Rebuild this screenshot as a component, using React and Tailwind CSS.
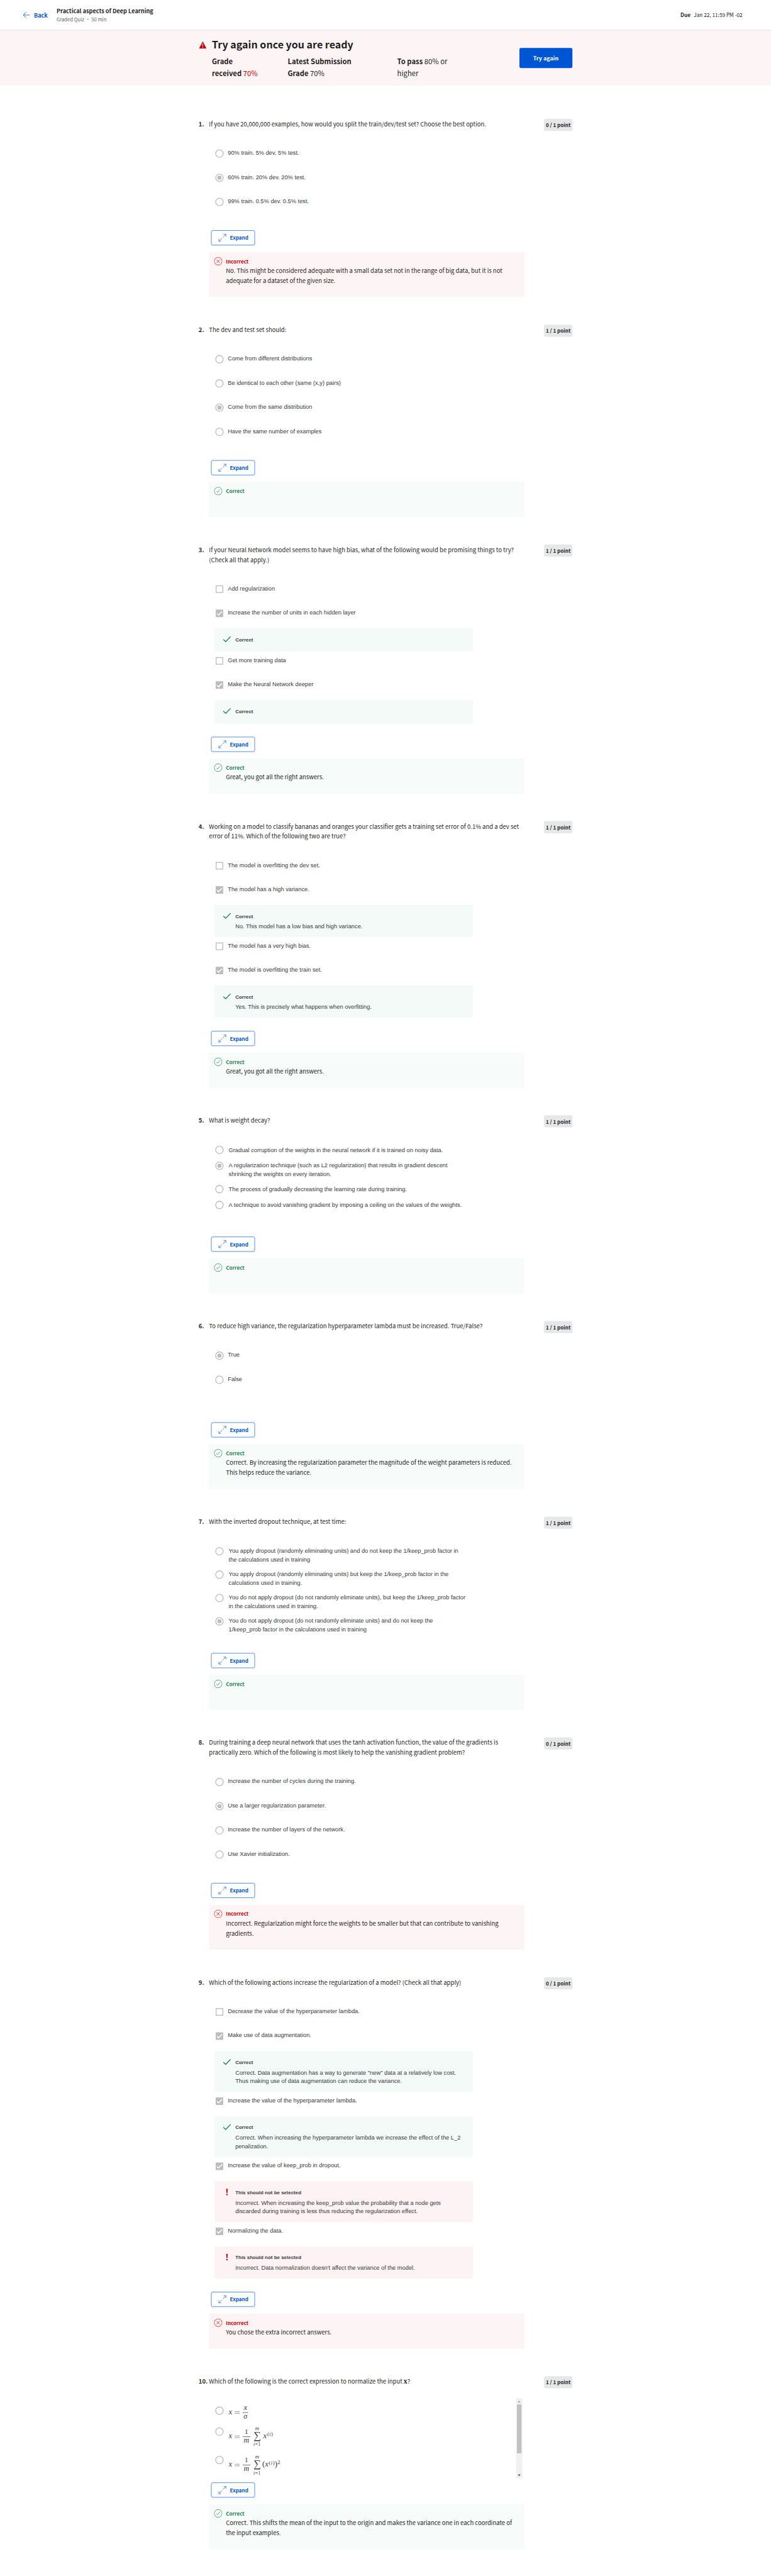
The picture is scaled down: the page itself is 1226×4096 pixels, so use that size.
import React from "react";

const SANS = "font-['Noto_Sans_CJK_SC','Source_Sans_3',sans-serif]";
const ARIAL = "font-['Liberation_Sans',Arial,sans-serif]";

const questions = [
  {
    points: 0,
    text: ["If you have 20,000,000 examples, how would you split the train/dev/test set? Choose the best option."],
    options: [
      { text: "90% train. 5% dev. 5% test." },
      { text: "60% train. 20% dev. 20% test.", on: true },
      { text: "99% train. 0.5% dev. 0.5% test." },
    ],
    feedback: [
      "No. This might be considered adequate with a small data set not in the range of big data, but it is not",
      "adequate for a dataset of the given size.",
    ],
  },
  {
    points: 1,
    text: ["The dev and test set should:"],
    options: [
      { text: "Come from different distributions" },
      { text: "Be identical to each other (same (x,y) pairs)" },
      { text: "Come from the same distribution", on: true },
      { text: "Have the same number of examples" },
    ],
    feedback: [],
  },
  {
    points: 1,
    multi: true,
    text: [
      "If your Neural Network model seems to have high bias, what of the following would be promising things to try?",
      "(Check all that apply.)",
    ],
    options: [
      { text: "Add regularization" },
      { text: "Increase the number of units in each hidden layer", on: true, note: { ok: true, lines: [] } },
      { text: "Get more training data" },
      { text: "Make the Neural Network deeper", on: true, note: { ok: true, lines: [] } },
    ],
    feedback: ["Great, you got all the right answers."],
  },
  {
    points: 1,
    multi: true,
    text: [
      "Working on a model to classify bananas and oranges your classifier gets a training set error of 0.1% and a dev set",
      "error of 11%. Which of the following two are true?",
    ],
    options: [
      { text: "The model is overfitting the dev set." },
      {
        text: "The model has a high variance.",
        on: true,
        note: { ok: true, lines: ["No. This model has a low bias and high variance."] },
      },
      { text: "The model has a very high bias." },
      {
        text: "The model is overfitting the train set.",
        on: true,
        note: { ok: true, lines: ["Yes. This is precisely what happens when overfitting."] },
      },
    ],
    feedback: ["Great, you got all the right answers."],
  },
  {
    points: 1,
    text: ["What is weight decay?"],
    compact: [
      { lines: ["Gradual corruption of the weights in the neural network if it is trained on noisy data."] },
      {
        lines: [
          "A regularization technique (such as L2 regularization) that results in gradient descent",
          "shrinking the weights on every iteration.",
        ],
        on: true,
      },
      { lines: ["The process of gradually decreasing the learning rate during training."] },
      { lines: ["A technique to avoid vanishing gradient by imposing a ceiling on the values of the weights."] },
    ],
    bodyHeight: "h-[291px]",
    feedback: [],
  },
  {
    points: 1,
    text: ["To reduce high variance, the regularization hyperparameter lambda must be increased. True/False?"],
    options: [{ text: "True", on: true }, { text: "False" }],
    feedback: [
      "Correct. By increasing the regularization parameter the magnitude of the weight parameters is reduced.",
      "This helps reduce the variance.",
    ],
  },
  {
    points: 1,
    text: ["With the inverted dropout technique, at test time:"],
    compact: [
      {
        lines: [
          "You apply dropout (randomly eliminating units) and do not keep the 1/keep_prob factor in",
          "the calculations used in training",
        ],
      },
      {
        lines: [
          "You apply dropout (randomly eliminating units) but keep the 1/keep_prob factor in the",
          "calculations used in training.",
        ],
      },
      {
        lines: [
          "You do not apply dropout (do not randomly eliminate units), but keep the 1/keep_prob factor",
          "in the calculations used in training.",
        ],
      },
      {
        lines: [
          "You do not apply dropout (do not randomly eliminate units) and do not keep the",
          "1/keep_prob factor in the calculations used in training",
        ],
        on: true,
      },
    ],
    bodyHeight: "h-[327px]",
    feedback: [],
  },
  {
    points: 0,
    text: [
      "During training a deep neural network that uses the tanh activation function, the value of the gradients is",
      "practically zero. Which of the following is most likely to help the vanishing gradient problem?",
    ],
    options: [
      { text: "Increase the number of cycles during the training." },
      { text: "Use a larger regularization parameter.", on: true },
      { text: "Increase the number of layers of the network." },
      { text: "Use Xavier initialization." },
    ],
    feedback: [
      "Incorrect. Regularization might force the weights to be smaller but that can contribute to vanishing",
      "gradients.",
    ],
  },
  {
    points: 0,
    multi: true,
    text: ["Which of the following actions increase the regularization of a model? (Check all that apply)"],
    options: [
      { text: "Decrease the value of the hyperparameter lambda." },
      {
        text: "Make use of data augmentation.",
        on: true,
        note: {
          ok: true,
          lines: [
            'Correct. Data augmentation has a way to generate "new" data at a relatively low cost.',
            "Thus making use of data augmentation can reduce the variance.",
          ],
        },
      },
      {
        text: "Increase the value of the hyperparameter lambda.",
        on: true,
        note: {
          ok: true,
          lines: [
            "Correct. When increasing the hyperparameter lambda we increase the effect of the L_2",
            "penalization.",
          ],
        },
      },
      {
        text: "Increase the value of keep_prob in dropout.",
        on: true,
        note: {
          ok: false,
          lines: [
            "Incorrect. When increasing the keep_prob value the probability that a node gets",
            "discarded during training is less thus reducing the regularization effect.",
          ],
        },
      },
      {
        text: "Normalizing the data.",
        on: true,
        note: { ok: false, lines: ["Incorrect. Data normalization doesn't affect the variance of the model."] },
      },
    ],
    feedback: ["You chose the extra incorrect answers."],
  },
  {
    points: 1,
    text: [
      <React.Fragment key="t">
        Which of the following is the correct expression to normalize the input{" "}
        <b className="font-['Liberation_Serif',serif] text-[18px] leading-none">x</b>?
      </React.Fragment>,
    ],
    formulas: true,
    feedback: [
      "Correct. This shifts the mean of the input to the origin and makes the variance one in each coordinate of",
      "the input examples.",
    ],
  },
];

function Radio({ on }) {
  return (
    <span className="flex size-[20px] shrink-0 items-center justify-center rounded-full border-2 border-[#bdbdbd] bg-white">
      {on && <span className="size-[10px] rounded-full bg-[#bdbdbd]" />}
    </span>
  );
}

function Checkbox({ on }) {
  if (!on) return <span className="mx-px block size-[18px] shrink-0 border-2 border-[#bdbdbd] bg-white" />;
  return (
    <span className="mx-px block size-[18px] shrink-0 rounded-[1px] bg-[#bdbdbd]">
      <svg viewBox="0 0 18 18" className="size-full" fill="none" stroke="#fff" strokeWidth="2.2">
        <path d="M2.8 9.3 7 13.2 15.3 4.6" />
      </svg>
    </span>
  );
}

function Note({ ok, lines }) {
  const height = lines.length === 0 ? "h-[56px]" : lines.length === 1 ? "h-[77px]" : "h-[98px]";
  return (
    <div className={`flex w-[620px] pl-[20px] ${height} ${ok ? "bg-[#f4faf8]" : "bg-[#fdf3f4]"}`}>
      {ok ? (
        <svg viewBox="0 0 20 20" className="mt-[16px] size-[20px]" fill="none" stroke="#1f8354" strokeWidth="2">
          <path d="M1.2 10.6 7 15.8 18.6 3.8" />
        </svg>
      ) : (
        <svg viewBox="0 0 20 20" className="mt-[16px] size-[20px]" fill="#d30001">
          <path d="M8.2 2h3.6l-.7 10.6H8.9zM8.4 14.4h3.2v3.1H8.4z" />
        </svg>
      )}
      <div className="ml-[10px] pt-[17px] whitespace-nowrap text-[#373a3c]">
        <p className="text-[12px] leading-[21px] font-bold">{ok ? "Correct" : "This should not be selected"}</p>
        <div className="pt-[3px]">
          {lines.map((l) => (
            <p key={l} className="text-[14px] leading-[21px]">{l}</p>
          ))}
        </div>
      </div>
    </div>
  );
}

function Options({ q }) {
  return (
    <div className={`${ARIAL} min-h-[150px] text-[14px] leading-[21px] text-[#373a3c]`}>
      {q.options.map((o) => (
        <React.Fragment key={o.text}>
          <div className="flex h-[58px] items-start gap-[10px] pl-[2px]">
            <span className={q.multi ? "mt-[13px]" : "mt-[12px]"}>
              {q.multi ? <Checkbox on={o.on} /> : <Radio on={o.on} />}
            </span>
            <span className="mt-[9.5px] whitespace-nowrap">{o.text}</span>
          </div>
          {o.note && <Note {...o.note} />}
        </React.Fragment>
      ))}
    </div>
  );
}

function CompactOptions({ items }) {
  return (
    <div className={`${ARIAL} pt-[3px] text-[14px] leading-[21px] text-[#373a3c]`}>
      {items.map((o) => (
        <div
          key={o.lines[0]}
          className={`flex items-start gap-[12px] pl-[2px] ${o.lines.length > 1 ? "h-[56px]" : "h-[38px]"}`}
        >
          <span className="mt-[9px]"><Radio on={o.on} /></span>
          <span className={`whitespace-nowrap ${o.lines.length > 1 ? "mt-[7px]" : "mt-[8.5px]"}`}>
            {o.lines.map((l) => (
              <span key={l} className="block">{l}</span>
            ))}
          </span>
        </div>
      ))}
    </div>
  );
}

/* Mean / mean of squares: x = 1/m * sum of the term on the right */
function SumFormula({ squared }) {
  return (
    <svg width="140" height="54" viewBox="0 0 140 54" fill="#373a3c" className="font-['Liberation_Serif',serif]">
      <text x="0" y="30" fontSize="19" fontStyle="italic">x</text>
      <path d="M14.5 24.2h12M14.5 28.2h12" stroke="#373a3c" strokeWidth="0.8" />
      <text x="42.5" y="19" fontSize="17" textAnchor="middle">1</text>
      <path d="M34 26.3h18" stroke="#373a3c" strokeWidth="1.1" />
      <text x="42.7" y="41" fontSize="18" fontStyle="italic" textAnchor="middle">m</text>
      <text x="68.3" y="10.7" fontSize="13" fontStyle="italic" textAnchor="middle">m</text>
      <text x="68.3" y="32" fontSize="25" textAnchor="middle">∑</text>
      <text x="68.3" y="48.7" fontSize="12" textAnchor="middle" letterSpacing="0.4">
        <tspan fontStyle="italic">i</tspan>=1
      </text>
      {squared ? (
        <>
          <text x="80.5" y="30.5" fontSize="20">(</text>
          <text x="87" y="30" fontSize="19" fontStyle="italic">x</text>
          <text x="96.5" y="24.7" fontSize="13" letterSpacing="0.6">(<tspan fontStyle="italic">i</tspan>)</text>
          <text x="110.5" y="30.5" fontSize="20">)</text>
          <text x="117" y="23.7" fontSize="12.5">2</text>
        </>
      ) : (
        <>
          <text x="83" y="30" fontSize="19" fontStyle="italic">x</text>
          <text x="92.7" y="24.7" fontSize="13" letterSpacing="0.6">(<tspan fontStyle="italic">i</tspan>)</text>
        </>
      )}
    </svg>
  );
}

function RatioFormula() {
  return (
    <svg width="60" height="40" viewBox="0 0 60 40" fill="#373a3c" className="font-['Liberation_Serif',serif]">
      <text x="0" y="22" fontSize="19" fontStyle="italic">x</text>
      <path d="M14.5 16.2h12M14.5 20.2h12" stroke="#373a3c" strokeWidth="0.8" />
      <text x="40.3" y="11.7" fontSize="19" fontStyle="italic" textAnchor="middle">x</text>
      <path d="M34 18.3h13" stroke="#373a3c" strokeWidth="1.1" />
      <text x="40.3" y="33.7" fontSize="18" fontStyle="italic" textAnchor="middle">σ</text>
    </svg>
  );
}

function FormulaOptions() {
  return (
    <div className="mt-[-8px] flex h-[192px] w-[738px] justify-between">
      <div className="pl-[2px]">
        <div className="flex h-[50px] gap-[12px] pt-[16px]">
          <span className="mt-[4px]"><Radio /></span>
          <RatioFormula />
        </div>
        <div className="flex h-[68px] gap-[12px] pt-[16px]">
          <span className="mt-[4px]"><Radio /></span>
          <SumFormula />
        </div>
        <div className="flex h-[68px] gap-[12px] pt-[16px]">
          <span className="mt-[4px]"><Radio /></span>
          <SumFormula squared />
        </div>
      </div>
      <div className="flex w-[15px] flex-col items-center bg-[#f1f1f1]">
        <svg viewBox="0 0 15 15" className="size-[15px] shrink-0" fill="#a3a3a3"><path d="M4 10h7L7.5 5.8z" /></svg>
        <div className="h-[117px] w-[11px] bg-[#c1c1c1]" />
        <svg viewBox="0 0 15 15" className="mt-auto size-[15px] shrink-0" fill="#505050"><path d="M4 5.5h7L7.5 9.7z" /></svg>
      </div>
    </div>
  );
}

function ExpandButton() {
  return (
    <button className="ml-[4.5px] flex h-[36px] w-[105.5px] items-center rounded-[4px] border border-[#0056d2] pl-[16px] text-[#0056d2]">
      <svg viewBox="0 0 20 20" className="size-[20px] shrink-0" fill="none" stroke="currentColor" strokeWidth="1">
        <path d="M13 1.5h5.5V7M18.5 1.5 11 9M9 11l-7.5 7.5M1.5 13v5.5H7" />
      </svg>
      <span className="ml-[8.5px] text-[12.15px] leading-[18px] font-bold">Expand</span>
    </button>
  );
}

function Feedback({ ok, lines }) {
  return (
    <div
      className={`mt-[16px] flex w-[756px] pl-[12px] ${lines.length > 1 ? "h-[108px]" : "h-[84px]"} ${
        ok ? "bg-[#f7fbf9]" : "bg-[#fdf5f5]"
      }`}
    >
      <svg
        viewBox="0 0 20 20"
        className="mt-[12px] size-[20px] shrink-0"
        fill="none"
        stroke={ok ? "#1f8354" : "#d30001"}
        strokeWidth="1.1"
      >
        <circle cx="10" cy="10" r="9.3" />
        {ok ? <path d="M5.8 10.6 8.6 13.2 14 6.6" /> : <path d="m6 6 8 8M14 6l-8 8" />}
      </svg>
      <div className="ml-[8.5px] pt-[13px] whitespace-nowrap">
        <p className={`text-[12.15px] leading-[18px] font-bold ${ok ? "text-[#1f8354]" : "text-[#d30001]"}`}>
          {ok ? "Correct" : "Incorrect"}
        </p>
        <div className="pt-px text-[14.31px] leading-[24px] text-[#1f1f1f]">
          {lines.map((l) => (
            <p key={l}>{l}</p>
          ))}
        </div>
      </div>
    </div>
  );
}

function Question({ q, n }) {
  return (
    <li className="flex items-start">
      <span className="w-[25px] shrink-0 text-[14.31px] leading-[24px] font-bold">{n}.</span>
      <div className="w-[803px] shrink-0">
        <div className={q.bodyHeight || (q.formulas ? "h-[255px]" : "pb-[32px]")}>
          <h3 className="mb-[37px] text-[14.31px] leading-[24px] whitespace-nowrap">
            {q.text.map((l, i) => (
              <span key={i} className="block h-[24px]">{l}</span>
            ))}
          </h3>
          <div className="pl-[13px]">
            {q.options && <Options q={q} />}
            {q.compact && <CompactOptions items={q.compact} />}
            {q.formulas && <FormulaOptions />}
          </div>
        </div>
        <ExpandButton />
        <Feedback ok={q.points === 1} lines={q.feedback} />
      </div>
      <span className="h-[29px] w-[68px] shrink-0 rounded-[4px] bg-[#e5e7e8] text-center text-[12.15px] leading-[30px] font-bold whitespace-nowrap">
        {q.points} / 1 point
      </span>
    </li>
  );
}

export default function App() {
  return (
    <div className="h-[4096px] w-[1226px] overflow-hidden bg-white">
      <div className={`${SANS} h-[6174px] w-[1848px] origin-top-left scale-[0.66342] bg-white text-[#1f1f1f]`}>
        <header className="flex h-[73px] items-center border-b border-[#bdbdbd] pl-[55px] whitespace-nowrap">
          <a className="flex w-[80.5px] items-center text-[#0056d2]">
            <svg viewBox="0 0 18 18" className="size-[18px]" fill="none" stroke="currentColor" strokeWidth="1.2">
              <path d="M16.5 9H.9M7.5 2.2.9 9l6.6 6.8" />
            </svg>
            <span className="ml-[8.5px] text-[13.6px] leading-[20px] font-bold">Back</span>
          </a>
          <div>
            <h1 className="text-[13.8px] leading-[21px] font-bold">Practical aspects of Deep Learning</h1>
            <p className="text-[11.62px] leading-[21px] text-[#666]">Graded Quiz • 50 min</p>
          </div>
          <p className="ml-auto flex w-[217px] text-[12.43px] leading-[20px]">
            <b className="w-[32px]">Due</b>
            <span>Jan 22, 11:59 PM -02</span>
          </p>
        </header>

        <section className="flex h-[132px] bg-[#fdf5f5] pl-[477px]">
          <svg viewBox="0 0 18 18" className="mt-[25.5px] size-[18px] shrink-0" fill="#d30001">
            <path d="M9 0 18 17.5H0z" />
            <path d="M8.1 5.5h1.8v6H8.1zM8.1 13h1.8v2H8.1z" fill="#fdf5f5" />
          </svg>
          <div className="ml-[13px] w-[736.5px] pt-[17px]">
            <h2 className="text-[24.2px] leading-[32px] font-bold">Try again once you are ready</h2>
            <div className="flex pt-[10.5px] text-[17px] leading-[28px] whitespace-nowrap">
              <p className="w-[181.5px]">
                <b>Grade<br />received</b> <span className="text-[#d30001]">70%</span>
              </p>
              <p className="w-[262.5px]">
                <b>Latest Submission<br />Grade</b> 70%
              </p>
              <p>
                <b>To pass</b> 80% or<br />higher
              </p>
            </div>
          </div>
          <button className="mt-[42px] h-[48px] w-[127.5px] rounded-[4px] bg-[#0056d2] text-[13.47px] leading-[48px] font-bold text-white">
            Try again
          </button>
        </section>

        <ol className="mt-[80px] ml-[476px] flex w-[896px] flex-col gap-[66px]">
          {questions.map((q, i) => (
            <Question key={i} q={q} n={i + 1} />
          ))}
        </ol>
      </div>
    </div>
  );
}
